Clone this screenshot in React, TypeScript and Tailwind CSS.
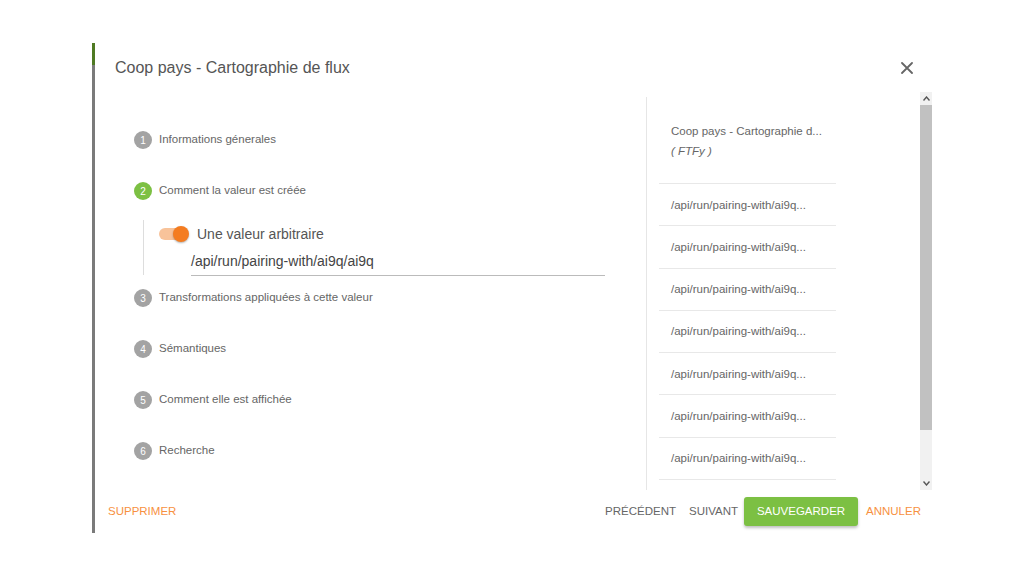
const STEPS_AFTER = [
  { n: 3, label: "Transformations appliquées à cette valeur" },
  { n: 4, label: "Sémantiques" },
  { n: 5, label: "Comment elle est affichée" },
  { n: 6, label: "Recherche" },
];

const ROUTES = Array.from({ length: 7 }, () => "/api/run/pairing-with/ai9q...");

function StepDot({ n, active }: { n: number; active?: boolean }) {
  return (
    <span
      className={`flex h-[18px] w-[18px] shrink-0 items-center justify-center rounded-full text-[10px] text-white ${
        active ? "bg-[#7cc043]" : "bg-[#a3a3a3]"
      }`}
    >
      {n}
    </span>
  );
}

function Step({ n, label, active, className = "" }: { n: number; label: string; active?: boolean; className?: string }) {
  return (
    <div className={`flex h-[18px] items-center gap-[7px] ${className}`}>
      <StepDot n={n} active={active} />
      <span className="text-[11.5px] text-[#666]">{label}</span>
    </div>
  );
}

export default function App() {
  return (
    <div className="h-[576px] w-[1024px] overflow-hidden bg-white pl-[92px] pt-[43px] font-['Liberation_Sans',Arial,sans-serif]">
      <div className="flex h-[490px] w-[845px]">
        <div className="flex w-[3px] flex-col">
          <div className="h-[22px] bg-[#4f7a23]" />
          <div className="flex-1 bg-[#7a7a7a]" />
        </div>

        <div className="flex flex-1 flex-col">
          <header className="flex h-[49px] items-center justify-between pl-[20px] pr-[24px]">
            <h1 className="text-[16px] text-[#555]">Coop pays - Cartographie de flux</h1>
            <svg width="12" height="12" viewBox="0 0 12 12" className="text-[#666]">
              <path d="M1 1L11 11M11 1L1 11" stroke="currentColor" strokeWidth="1.8" strokeLinecap="round" />
            </svg>
          </header>

          <div className="flex h-[398px]">
            <div className="w-[551px] pl-[39px] pt-[39px]">
              <Step n={1} label="Informations génerales" />
              <Step n={2} label="Comment la valeur est créée" active className="mt-[33px]" />
              <div className="ml-[9px] mt-[20px] h-[55px] border-l border-[#ddd] pl-[15px]">
                <div className="flex h-[28px] items-center gap-[10px]">
                  <div className="relative h-[12px] w-[28px] rounded-full bg-[#f8c39a]">
                    <span className="absolute -top-[2px] right-[-2px] h-[16px] w-[16px] rounded-full bg-[#f47c20] shadow-[0_1px_2px_rgba(0,0,0,0.3)]" />
                  </div>
                  <span className="text-[14px] text-[#555]">Une valeur arbitraire</span>
                </div>
                <div className="ml-[32px] flex h-[28px] w-[414px] items-center border-b border-[#bbb] text-[14px] text-[#444]">
                  /api/run/pairing-with/ai9q/ai9q
                </div>
              </div>
              {STEPS_AFTER.map((s, i) => (
                <Step key={s.n} n={s.n} label={s.label} className={i === 0 ? "mt-[14px]" : "mt-[33px]"} />
              ))}
            </div>

            <div className="mt-[5px] w-[274px] border-l border-[#e6e6e6] pl-[12px]">
              <div className="w-[177px]">
                <div className="h-[87px] border-b border-[#e8e8e8] pl-[12px] pt-[24px] text-[11.5px] leading-[20px] text-[#666]">
                  <div>Coop pays - Cartographie d...</div>
                  <div className="italic">( FTFy )</div>
                </div>
                {ROUTES.map((r, i) => (
                  <div
                    key={i}
                    className="flex h-[42.3px] items-center border-b border-[#e8e8e8] pl-[12px] pt-[1px] text-[11.5px] text-[#666]"
                  >
                    {r}
                  </div>
                ))}
              </div>
            </div>

            <div className="flex w-[12px] flex-col bg-[#f1f1f1]">
              <div className="flex h-[13px] items-center justify-center text-[#555]">
                <svg width="7" height="5" viewBox="0 0 7 5">
                  <path d="M0.5 4.5L3.5 1L6.5 4.5" stroke="currentColor" strokeWidth="1.4" fill="none" />
                </svg>
              </div>
              <div className="h-[325px] bg-[#c1c1c1]" />
              <div className="flex-1" />
              <div className="flex h-[13px] items-center justify-center text-[#555]">
                <svg width="7" height="5" viewBox="0 0 7 5">
                  <path d="M0.5 0.5L3.5 4L6.5 0.5" stroke="currentColor" strokeWidth="1.4" fill="none" />
                </svg>
              </div>
            </div>
          </div>

          <footer className="flex h-[43px] items-center pl-[13px] pr-[16px] text-[11.5px]">
            <button className="text-[#f7913f]">SUPPRIMER</button>
            <div className="ml-auto flex items-center">
              <button className="text-[#666]">PRÉCÉDENT</button>
              <button className="ml-[13px] text-[#666]">SUIVANT</button>
              <button className="ml-[6px] h-[29px] w-[114px] rounded-[3px] bg-[#7cc043] text-[11.5px] text-white shadow-[0_2px_3px_rgba(0,0,0,0.25)]">
                SAUVEGARDER
              </button>
              <button className="ml-[8px] text-[#f7913f]">ANNULER</button>
            </div>
          </footer>
        </div>
      </div>
    </div>
  );
}
